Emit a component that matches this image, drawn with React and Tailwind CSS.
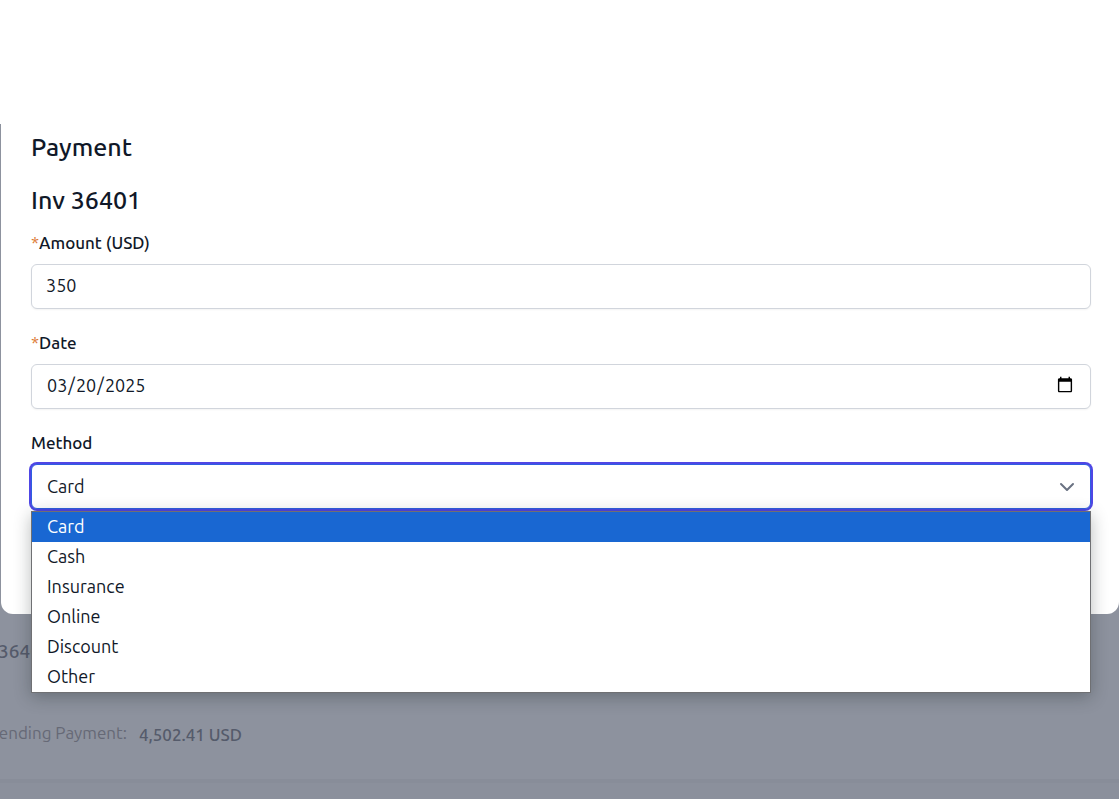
import { useState } from "react";
import { ChevronDown } from "lucide-react";

const METHODS = ["Card", "Cash", "Insurance", "Online", "Discount", "Other"];

const labelClass = "block text-[17px] leading-6 font-medium text-gray-900";
const fieldClass =
  "mt-[9px] block h-[45px] w-full rounded-md border border-gray-300 bg-white pr-[14px] pb-1 pl-[14px] text-lg text-gray-900 shadow-xs outline-none";

function InvoicePage() {
  return (
    <main className="flex min-h-screen flex-col overflow-hidden bg-[#8d929e]">
      <div className="h-[124px] bg-white" />
      <section className="flex flex-1 flex-col pt-[515px] text-[#555b6b]">
        <p className="-ml-0.5 text-[19px] leading-6 font-medium">36401</p>
        <dl className="mt-[58px] -ml-[11px] flex gap-3 text-[17px] leading-6">
          <dt className="text-[#666976]">Pending Payment:</dt>
          <dd className="mt-0.5 font-medium">4,502.41 USD</dd>
        </dl>
      </section>
      <footer className="mt-auto h-5 border-t-4 border-[#888d99] bg-[#8b909c]" />
    </main>
  );
}

function MethodSelect() {
  const [method, setMethod] = useState("Card");
  return (
    <div className="relative mt-[9px]">
      <select
        id="method"
        value={method}
        onChange={(e) => setMethod(e.target.value)}
        className="block h-[45px] w-full appearance-none rounded-md border border-[#2f5fe0] bg-white pr-10 pb-0.5 pl-[15px] text-lg text-gray-900 ring-2 ring-[#4f46e5] outline-none"
      >
        {METHODS.map((m) => (
          <option key={m}>{m}</option>
        ))}
      </select>
      <ChevronDown
        className="pointer-events-none absolute top-[11px] right-3 size-6 text-gray-500"
        strokeWidth={2}
        aria-hidden="true"
      />
      <ul
        role="listbox"
        aria-label="Method"
        className="absolute inset-x-0 top-full mt-0.5 border border-[#6f7073] bg-white shadow-[0_4px_16px_rgba(20,30,30,0.3)]"
      >
        {METHODS.map((m) => (
          <li
            key={m}
            role="option"
            aria-selected={m === method}
            onClick={() => setMethod(m)}
            className="h-[30px] px-[15px] text-lg leading-7 text-gray-900 aria-selected:bg-[#1967d2] aria-selected:text-white"
          >
            {m}
          </li>
        ))}
      </ul>
    </div>
  );
}

export default function App() {
  return (
    <div className="relative font-['Ubuntu','Noto_Sans',sans-serif]">
      <InvoicePage />
      <div
        role="dialog"
        aria-labelledby="payment-title"
        className="absolute inset-x-0 top-0 ml-px rounded-b-xl bg-white pt-[131px] pr-7 pb-[105px] pl-[30px]"
      >
        <h2 id="payment-title" className="text-[25px] leading-8 font-medium text-gray-900">
          Payment
        </h2>
        <h3 className="mt-[21px] text-[25px] leading-8 font-medium text-gray-900">Inv 36401</h3>
        <form className="mt-[15px] flex flex-col gap-[22px]">
          <div>
            <label htmlFor="amount" className={labelClass}>
              <span className="font-normal text-[#dd7a35]">*</span>Amount (USD)
            </label>
            <input id="amount" type="text" defaultValue="350" className={fieldClass} />
          </div>
          <div>
            <label htmlFor="date" className={labelClass}>
              <span className="font-normal text-[#dd7a35]">*</span>Date
            </label>
            <input id="date" type="date" defaultValue="2025-03-20" className={fieldClass} />
          </div>
          <div>
            <label htmlFor="method" className={labelClass}>
              Method
            </label>
            <MethodSelect />
          </div>
        </form>
      </div>
    </div>
  );
}
